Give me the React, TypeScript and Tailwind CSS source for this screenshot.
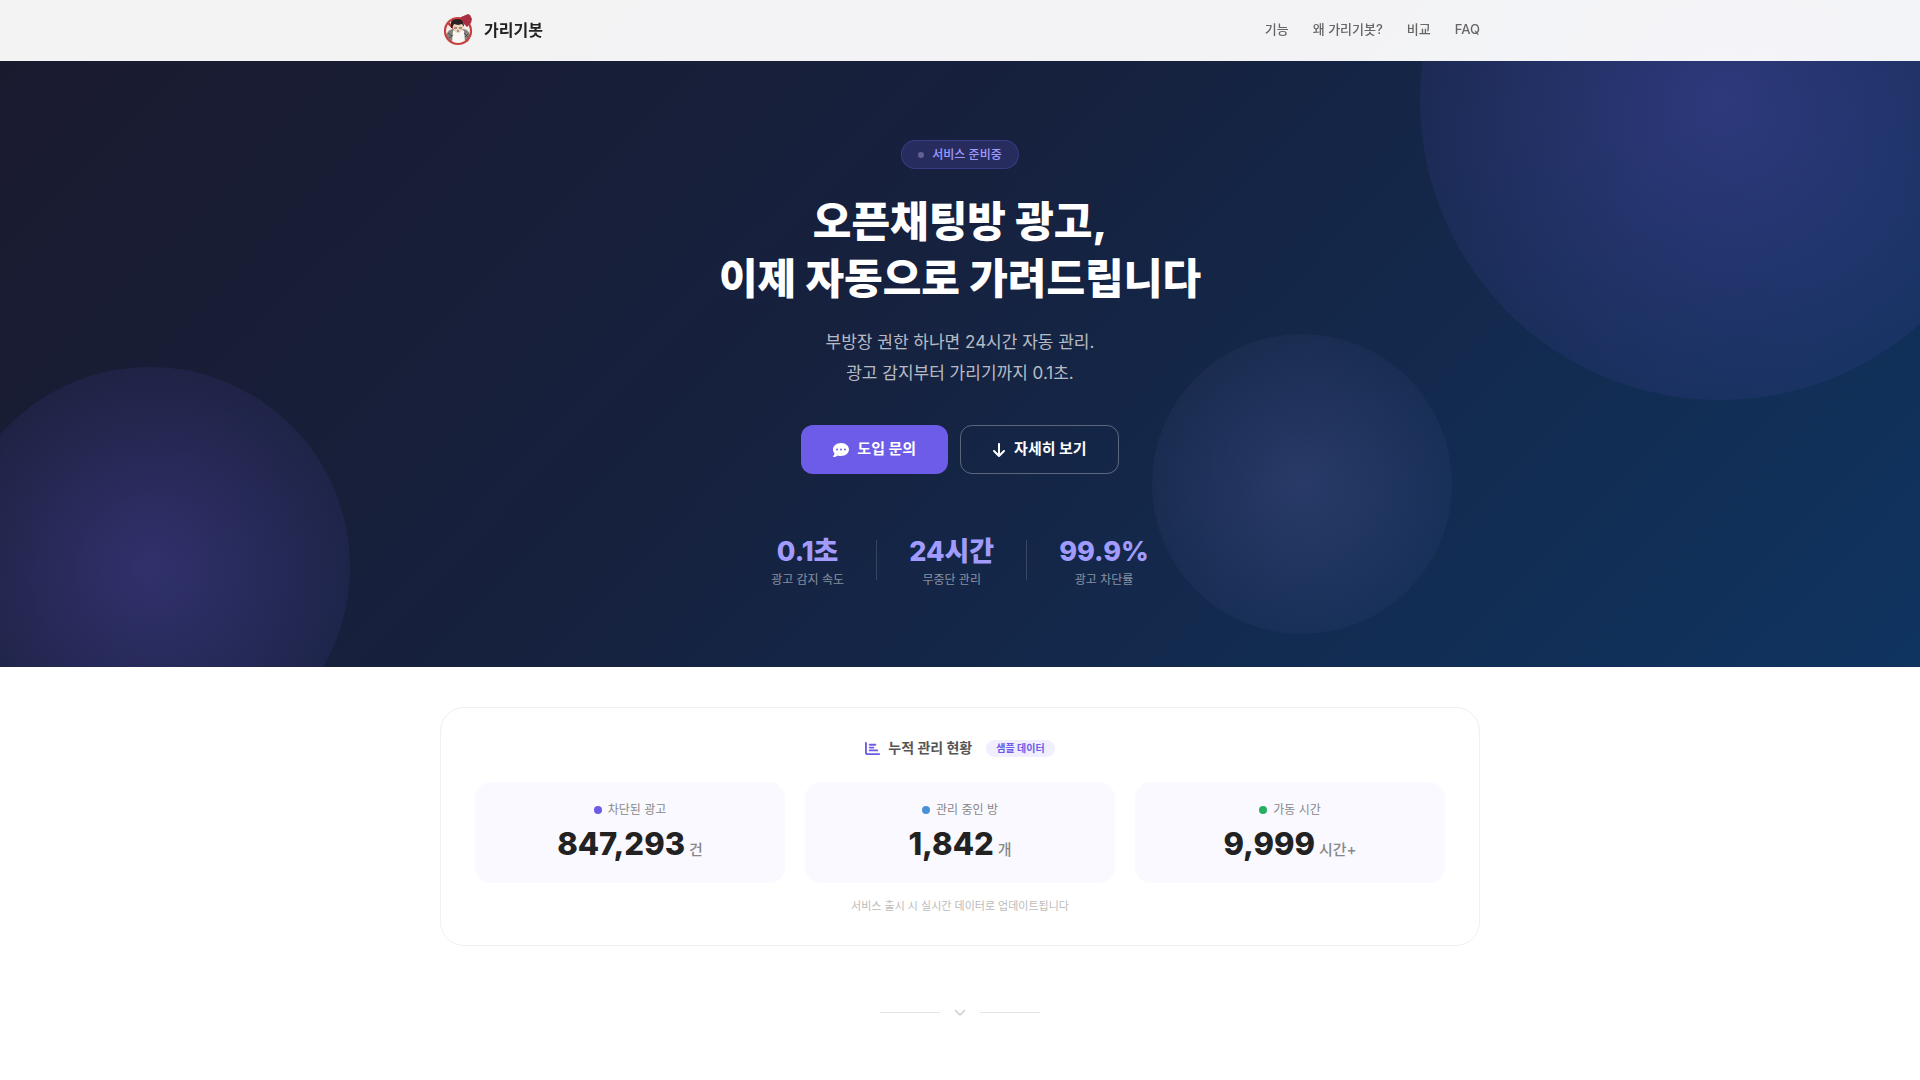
import React from "react";
import { FaArrowDown, FaChartBar, FaChevronDown, FaCommentDots } from "react-icons/fa6";

const navLinks = [
  { label: "기능", href: "#features" },
  { label: "왜 가리기봇?", href: "#why" },
  { label: "비교", href: "#compare" },
  { label: "FAQ", href: "#faq" },
];

const heroStats = [
  { value: "0.1초", label: "광고 감지 속도" },
  { value: "24시간", label: "무중단 관리" },
  { value: "99.9%", label: "광고 차단률" },
];

const liveStats = [
  { label: "차단된 광고", value: "847,293", unit: "건", dot: "bg-[#6c5ce7]" },
  { label: "관리 중인 방", value: "1,842", unit: "개", dot: "bg-[#4a90d9]" },
  { label: "가동 시간", value: "9,999", unit: "시간+", dot: "bg-[#27ae60]" },
];

const Logo: React.FC = () => (
  <svg viewBox="0 0 36 36" className="size-9" fill="none" aria-hidden="true">
    <circle cx="18" cy="19" r="13" fill="#f3eeec" />
    <path d="M8 11l20 18" stroke="#c8403c" strokeWidth="2.4" />
    {/* jacket and shirt */}
    <path d="M6 23c2-4 4-6 8-6h9c4 0 6 3 7 6-1 3-4 6-7 7H13c-3-1-6-4-7-7z" fill="#85837f" />
    <path d="M13 19l3-2h5l3 2 1 11c-4 2-9 2-13 0z" fill="#f8f7f3" />
    <path d="M8 21l4 3M9 26l4-3M25 25l3-3M24 21l4 4" stroke="#4e4a48" strokeWidth="1" />
    {/* head */}
    <path d="M13 12c0-3 10-3 10 0v4c-1 3-3 5-5 5s-4-2-5-5z" fill="#efd2ba" />
    <path d="M11 16C10 9 12 6 17 6c4 0 7 2 7 9l-2-3-4 1-4-1-2 4z" fill="#2a2223" />
    <path d="M14 16h3M19 16h3M17 19h2" stroke="#5b4540" strokeWidth="1" />
    <circle cx="18" cy="19" r="13" stroke="#c8403c" strokeWidth="2.2" />
    {/* red card held up over the ring */}
    <path d="M21 5l7-3 2 1 2 4-1 4-4 4-3-3-3-5z" fill="#a82f42" />
  </svg>
);

const Header: React.FC = () => (
  <header className="fixed inset-x-0 top-0 z-10 bg-white/95">
    <div className="max-w-[1040px] mx-auto h-[61px] pb-0.5 flex items-center justify-between">
      <a href="#top" className="flex items-center gap-2 text-base font-bold text-[#222]">
        <Logo />
        가리기봇
      </a>
      <nav className="flex gap-6 text-[13px] font-medium text-[#666]">
        {navLinks.map((link) => (
          <a key={link.href} href={link.href}>
            {link.label}
          </a>
        ))}
      </nav>
    </div>
  </header>
);

const Hero: React.FC = () => (
  <section
    id="top"
    className="relative overflow-hidden bg-[linear-gradient(135deg,#1a1a2e_0%,#16213e_45%,#0f3460_100%)] pt-[140px] pb-[79px] text-center"
  >
    <div className="absolute -top-[200px] -right-[100px] size-[600px] rounded-full opacity-30 bg-[radial-gradient(circle,#6c5ce7,transparent)]" />
    <div className="absolute -bottom-[100px] -left-[50px] size-[400px] rounded-full opacity-30 bg-[radial-gradient(circle,#6c5ce7,transparent)]" />
    <div className="absolute top-1/2 left-[60%] size-[300px] rounded-full opacity-15 bg-[radial-gradient(circle,#a29bfe,transparent)]" />

    <div className="relative flex flex-col items-center px-6">
      <span className="inline-flex items-center gap-2 h-[29px] px-4 rounded-full border border-[#6c5ce7]/30 bg-[#6c5ce7]/20 text-xs font-medium text-[#a29bfe]">
        <span className="size-1.5 rounded-full bg-[#636190]" />
        서비스 준비중
      </span>
      <h1 className="mt-6 text-[42px] leading-[57px] font-extrabold text-white">
        오픈채팅방 광고,
        <br />
        이제 자동으로 가려드립니다
      </h1>
      <p className="mt-5 text-[17px] leading-[31px] text-white/70">
        부방장 권한 하나면 24시간 자동 관리.
        <br />
        광고 감지부터 가리기까지 0.1초.
      </p>
      <div className="mt-9 flex gap-3">
        <button className="flex items-center gap-2 h-[49px] px-8 rounded-xl bg-[#6c5ce7] text-[15px] font-bold text-white">
          <FaCommentDots className="size-4" />
          도입 문의
        </button>
        <button className="flex items-center gap-2 h-[49px] px-[31px] rounded-xl border border-white/30 text-[15px] font-bold text-white">
          <FaArrowDown className="w-3.5 h-4" />
          자세히 보기
        </button>
      </div>
      <dl className="mt-[58px] flex items-center">
        {heroStats.map((stat, i) => (
          <React.Fragment key={stat.label}>
            {i > 0 && <div className="mx-8 w-px h-10 bg-white/15" />}
            <div className="flex flex-col-reverse">
              <dt className="text-xs leading-4 text-white/50">{stat.label}</dt>
              <dd className="text-[27px] leading-10 font-extrabold text-[#a29bfe]">{stat.value}</dd>
            </div>
          </React.Fragment>
        ))}
      </dl>
    </div>
  </section>
);

const LiveStats: React.FC = () => (
  <section className="max-w-[1040px] mx-auto mt-10 px-[34px] pt-7 pb-[31px] rounded-3xl border border-[#f0f0f3] text-center">
    <div className="flex items-center justify-center gap-2">
      <FaChartBar className="size-[15px] text-[#6c5ce7]" />
      <h2 className="text-sm leading-6 font-bold text-[#555]">누적 관리 현황</h2>
      <span className="ml-1.5 px-2.5 rounded-full bg-[#f0eeff] text-[10px] leading-[17px] font-bold text-[#6c5ce7]">
        샘플 데이터
      </span>
    </div>
    <div className="mt-[22px] grid grid-cols-3 gap-5">
      {liveStats.map((stat) => (
        <div key={stat.label} className="py-[18px] rounded-2xl bg-[#faf9ff]">
          <div className="flex items-center justify-center gap-1.5 text-xs leading-5 text-[#888]">
            <span className={`size-2 rounded-full ${stat.dot}`} />
            {stat.label}
          </div>
          <div className="mt-[3px] text-[31px] leading-[42px] font-extrabold text-[#222]">
            {stat.value}
            <span className="ml-1 text-[15px] leading-none font-medium text-[#888]">{stat.unit}</span>
          </div>
        </div>
      ))}
    </div>
    <p className="mt-[15px] text-[11px] leading-4 text-[#bbb]">서비스 출시 시 실시간 데이터로 업데이트됩니다</p>
  </section>
);

const Divider: React.FC = () => (
  <div className="mt-[60px] pb-15 flex items-center justify-center gap-3 text-[#ccc]">
    <span className="w-[60px] h-px bg-[#e5e5e5]" />
    <FaChevronDown className="size-3 mx-0.5" />
    <span className="w-[60px] h-px bg-[#e5e5e5]" />
  </div>
);

export default function App() {
  return (
    <div className="min-h-screen bg-white font-[Inter,'Noto_Sans_CJK_KR',sans-serif]">
      <Header />
      <main>
        <Hero />
        <LiveStats />
        <Divider />
      </main>
    </div>
  );
}
